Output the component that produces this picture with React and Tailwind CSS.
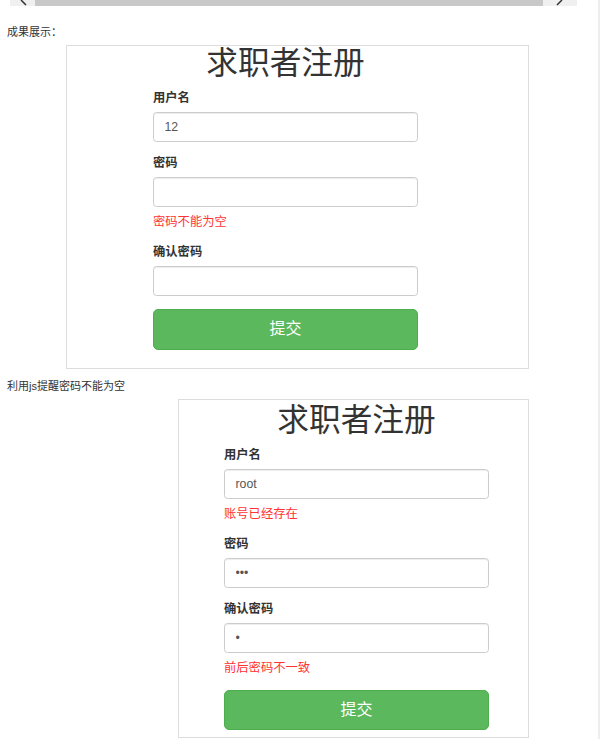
import React from 'react';

function Field({ label, value, type = 'text', error }) {
    return (
        <div className={error ? 'mb-[12.5px]' : 'mb-[13.2px]'}>
            <label className="block text-[12.3px] leading-[17.6px] font-bold text-[#333] mb-[4.4px]">{label}</label>
            <input
                type={type}
                readOnly
                defaultValue={value}
                className="block w-full h-[30px] px-[10.5px] text-[12.3px] text-[#555] bg-white border border-[#ccc] rounded-[3.5px] shadow-[inset_0_1px_1px_rgba(0,0,0,0.075)] outline-none"
            />
            {error && (
                <div className="mt-[7px] text-[12.3px] leading-[17.6px] text-[#ff3333]">{error}</div>
            )}
        </div>
    );
}

function RegisterForm({ fields }) {
    return (
        <form className="w-[265px]" onSubmit={(e) => e.preventDefault()}>
            <h1 className="text-center text-[31.7px] leading-[35px] font-normal text-[#333] mb-[8.8px]">求职者注册</h1>
            {fields.map((f) => (
                <Field key={f.label} {...f} />
            ))}
            <button
                type="submit"
                className="block w-full h-[40.5px] bg-[#5cb85c] border border-[#4cae4c] rounded-[5px] text-white text-[16px]"
            >
                提交
            </button>
        </form>
    );
}

export default function App() {
    return (
        <div className="w-[600px] min-h-[739px] bg-white border-r-2 border-[#eeeeee] font-['Liberation_Sans','Noto_Sans_CJK_SC',sans-serif] text-[#333]">
            {/* horizontal scrollbar cut off at the top */}
            <div className="ml-[10px] w-[567px] h-[6px] flex bg-[#f0f0f0]">
                <div className="w-[25px] flex justify-center">
                    <svg width="8" height="6" viewBox="0 0 8 6" className="ml-[2px]">
                        <polyline points="1,0 6,5" fill="none" stroke="#333" strokeWidth="1.5" />
                    </svg>
                </div>
                <div className="w-[508px] bg-[#c8c8c8]" />
                <div className="flex-1 flex justify-center">
                    <svg width="8" height="6" viewBox="0 0 8 6">
                        <polyline points="6,0 1,5" fill="none" stroke="#333" strokeWidth="1.5" />
                    </svg>
                </div>
            </div>

            <p className="mt-[18px] ml-[7px] text-[11px] leading-[16px] text-[#333]">成果展示：</p>

            <div className="mt-[5px] ml-[66px] w-[463px] border border-[#dddddd] pb-[18px]">
                <div className="ml-[86px]">
                    <RegisterForm
                        fields={[
                            { label: '用户名', value: '12' },
                            { label: '密码', value: '', type: 'password', error: '密码不能为空' },
                            { label: '确认密码', value: '', type: 'password' },
                        ]}
                    />
                </div>
            </div>

            <p className="mt-[9px] ml-[7px] text-[11px] leading-[16px] text-[#333]">利用js提醒密码不能为空</p>

            <div className="mt-[5px] ml-[178px] w-[351px] border border-[#dddddd] pt-[3px] pb-[7px]">
                <div className="ml-[45px]">
                    <RegisterForm
                        fields={[
                            { label: '用户名', value: 'root', error: '账号已经存在' },
                            { label: '密码', value: '123', type: 'password' },
                            { label: '确认密码', value: '1', type: 'password', error: '前后密码不一致' },
                        ]}
                    />
                </div>
            </div>
        </div>
    );
}
